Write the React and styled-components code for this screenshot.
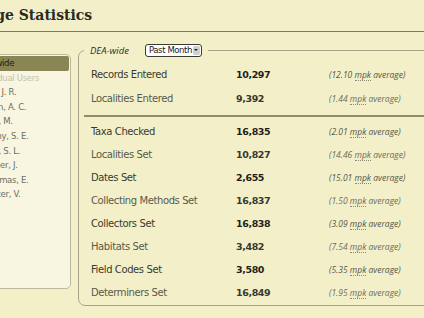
import styled, { createGlobalStyle } from "styled-components";

const GlobalStyle = createGlobalStyle`
  html, body {
    margin: 0;
    padding: 0;
    background: #f3f0c9;
    overflow: hidden;
  }
`;

const users = [
  "Lowe, J. R.",
  "Nelson, A. C.",
  "Grant, M.",
  "Murphy, S. E.",
  "Wood, S. L.",
  "Fletcher, J.",
  "Christmas, E.",
  "Spencer, V.",
];

const firstGroup = [
  { label: "Records Entered", count: "10,297", avg: "12.10" },
  { label: "Localities Entered", count: "9,392", avg: "1.44" },
];

const secondGroup = [
  { label: "Taxa Checked", count: "16,835", avg: "2.01" },
  { label: "Localities Set", count: "10,827", avg: "14.46" },
  { label: "Dates Set", count: "2,655", avg: "15.01" },
  { label: "Collecting Methods Set", count: "16,837", avg: "1.50" },
  { label: "Collectors Set", count: "16,838", avg: "3.09" },
  { label: "Habitats Set", count: "3,482", avg: "7.54" },
  { label: "Field Codes Set", count: "3,580", avg: "5.35" },
  { label: "Determiners Set", count: "16,849", avg: "1.95" },
];

const Page = styled.div`
  margin-left: -34px;
  width: 720px;
`;

const Header = styled.div`
  height: 32px;
  border-bottom: 1px solid #7e7a5c;
  display: flex;
  align-items: flex-end;
  box-sizing: border-box;
`;

const Title = styled.h1`
  margin: 0 0 8px 0;
  font-family: "DejaVu Serif", serif;
  font-weight: bold;
  font-size: 14px;
  line-height: 16px;
  color: #2b2a1e;
`;

const Main = styled.div`
  display: flex;
  align-items: flex-start;
`;

const Sidebar = styled.div`
  margin-top: 22px;
  width: 105px;
  height: 235px;
  box-sizing: border-box;
  border: 1px solid #bdb99c;
  border-radius: 5px;
  background: #f8f6e0;
  padding: 1px;
`;

const Item = styled.div`
  height: 14.6px;
  line-height: 14.6px;
  padding-left: 8px;
  font-family: "DejaVu Sans", sans-serif;
  font-size: 8.5px;
  letter-spacing: -0.3px;
  white-space: nowrap;
  color: ${(p) => (p.$selected ? "#1a1a10" : p.$disabled ? "#c4c2ac" : "#6e6e60")};
  background: ${(p) => (p.$selected ? "#8a8554" : "transparent")};
  border-radius: ${(p) => (p.$selected ? "2px" : "0")};
`;

const Fieldset = styled.fieldset`
  margin: 11px 0 0 7px;
  width: 420px;
  border: 1px solid #a6a387;
  border-radius: 7px;
  padding: 0 0 1.5px 5px;
  min-width: 0;
`;

const Legend = styled.legend`
  padding: 0 6px;
  height: 14px;
  display: flex;
  align-items: center;
  gap: 16px;
`;

const LegendText = styled.span`
  font-family: "Open Sans", sans-serif;
  font-style: italic;
  font-size: 9.5px;
  color: #2e2e24;
`;

const Select = styled.span`
  display: inline-flex;
  align-items: center;
  justify-content: space-between;
  height: 13px;
  width: 57px;
  box-sizing: border-box;
  border: 1px solid #3a3a30;
  border-radius: 3px;
  background: #ffffff;
  padding: 0 1px 0 3px;
  font-family: "DejaVu Sans", sans-serif;
  font-size: 8.5px;
  letter-spacing: -0.4px;
  color: #1a1a1a;
`;

const Arrow = styled.span`
  width: 7px;
  height: 9px;
  border-radius: 2px;
  background: #cfcfcf;
  display: flex;
  align-items: center;
  justify-content: center;
  &::after {
    content: "";
    border-left: 2px solid transparent;
    border-right: 2px solid transparent;
    border-top: 2px solid #222;
  }
`;

const Group = styled.div`
  padding-top: ${(p) => p.$top}px;
`;

const Row = styled.div`
  height: ${(p) => p.$h}px;
  display: grid;
  grid-template-columns: 145px 93px 1fr;
  align-items: center;
  padding-left: 7px;
`;

const Label = styled.span`
  font-family: "DejaVu Sans", sans-serif;
  font-size: 10px;
  letter-spacing: -0.4px;
  color: ${(p) => (p.$dim ? "#59594b" : "#3a3a2e")};
`;

const Count = styled.span`
  font-family: "DejaVu Sans", sans-serif;
  font-weight: bold;
  font-size: 9.5px;
  letter-spacing: -0.4px;
  color: ${(p) => (p.$dim ? "#38382e" : "#1f1f18")};
`;

const Avg = styled.span`
  font-family: "Open Sans", sans-serif;
  font-style: italic;
  font-size: 8.5px;
  color: ${(p) => (p.$dim ? "#6c6c5e" : "#55554a")};
`;

const Abbr = styled.span`
  border-bottom: 1px dotted #8a8a7a;
`;

const Divider = styled.div`
  height: 2px;
  background: #8f8c70;
  margin-top: 4.5px;
`;

const StatRow = ({ row, dim, h }) => (
  <Row $h={h}>
    <Label $dim={dim}>{row.label}</Label>
    <Count $dim={dim}>{row.count}</Count>
    <Avg $dim={dim}>
      ({row.avg} <Abbr>mpk</Abbr> average)
    </Avg>
  </Row>
);

export default function App() {
  return (
    <>
      <GlobalStyle />
      <Page>
        <Header>
          <Title>Usage Statistics</Title>
        </Header>
        <Main>
          <Sidebar>
            <Item $selected>DEA-wide</Item>
            <Item $disabled>Individual Users</Item>
            {users.map((u) => (
              <Item key={u}>{u}</Item>
            ))}
          </Sidebar>
          <Fieldset>
            <Legend>
              <LegendText>DEA-wide</LegendText>
              <Select>
                Past Month
                <Arrow />
              </Select>
            </Legend>
            <Group $top={5.5}>
              {firstGroup.map((r, i) => (
                <StatRow key={r.label} row={r} dim={i % 2 === 1} h={24} />
              ))}
            </Group>
            <Divider />
            <Group $top={2.5}>
              {secondGroup.map((r, i) => (
                <StatRow key={r.label} row={r} dim={i % 2 === 1} h={23} />
              ))}
            </Group>
          </Fieldset>
        </Main>
      </Page>
    </>
  );
}
